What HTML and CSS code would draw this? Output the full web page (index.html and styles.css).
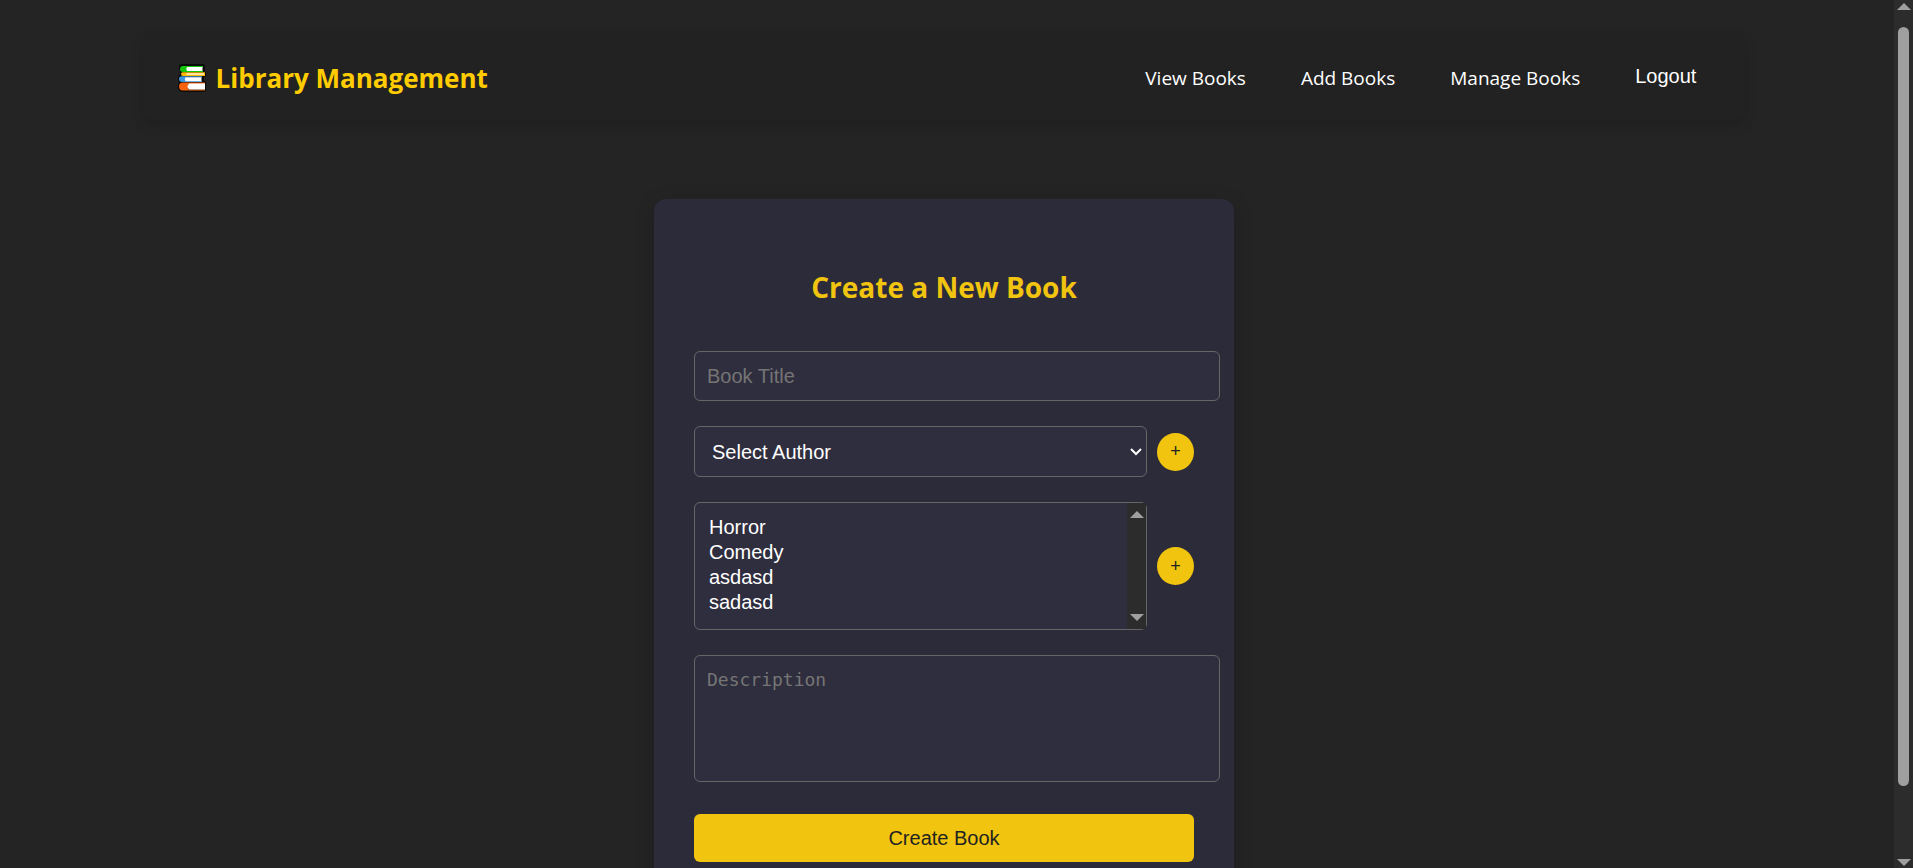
FILE: index.html
```
<!DOCTYPE html>
<html lang="en">
<head>
<meta charset="utf-8">
<title>Library Management</title>
<link rel="stylesheet" href="styles.css">
</head>
<body>
<div class="shell">
  <div class="content">
    <header class="navbar">
      <div class="brand">
        <svg class="brand-icon" viewBox="0 0 28 28" aria-hidden="true">
          <path d="M4 0h21q2 0 2 2v5l-1 1h1q1 0 1 1v3l-2 1v4h1q1 0 1 2v7q0 2-2 2H5q-4 0-5-4 0-4 1-6-1-2-1-4 0-2 2-4V7Q0 5 1 3 1 0 4 0z" fill="#0a0a0a"/>
          <path d="M5 2h20v1.500H9V7h16v1H5Q2 8 2 5t3-3z" fill="#16c60c"/>
          <path d="M9 3h15.500v4H9Q7.500 5 9 3z" fill="#fff"/>
          <path d="M5 8.200h22V12H5q-2 0-2-2t2-1.800z" fill="#ffb900"/>
          <path d="M8.500 9.200H26v1.600H8.500z" fill="#fff3c4"/>
          <path d="M4 12.200h20v1.300H8V17h16v1H4q-3 0-3-3t3-2.800z" fill="#3a96dd"/>
          <path d="M7.500 13.200H23.500v4h-16Q6 15 7.500 13.200z" fill="#fff"/>
          <path d="M5 18.500h22v1.500H10v5.500h17V26.500H5q-4 0-4-4t4-4z" fill="#f7630c"/>
          <path d="M11 19.500h16v6H11Q8 22.500 11 19.500z" fill="#fff"/>
        </svg>
        <span>Library Management</span>
      </div>
      <nav class="links">
        <a href="#view">View Books</a>
        <a href="#add">Add Books</a>
        <a href="#manage">Manage Books</a>
        <button type="button" class="logout">Logout</button>
      </nav>
    </header>

    <main class="card">
      <h1 class="card-title">Create a New Book</h1>
      <form class="form">
        <input class="field" type="text" placeholder="Book Title" aria-label="Book Title">
        <div class="row">
          <div class="control">
            <select class="field select" aria-label="Author">
              <option>Select Author</option>
            </select>
            <svg class="chevron" viewBox="0 0 12 8" aria-hidden="true"><path d="M1 1l5 5 5-5" fill="none" stroke="#fff" stroke-width="2"/></svg>
          </div>
          <button type="button" class="add" aria-label="Add author">+</button>
        </div>
        <div class="row">
          <div class="control">
            <select class="field list" multiple size="4" aria-label="Genres">
              <option>Horror</option>
              <option>Comedy</option>
              <option>asdasd</option>
              <option>sadasd</option>
            </select>
            <div class="list-bar" aria-hidden="true">
              <span class="arrow arrow-up"></span>
              <span class="arrow arrow-down"></span>
            </div>
          </div>
          <button type="button" class="add" aria-label="Add genre">+</button>
        </div>
        <textarea class="field area" placeholder="Description" aria-label="Description"></textarea>
        <button type="submit" class="submit">Create Book</button>
      </form>
    </main>
  </div>
  <div class="page-bar" aria-hidden="true">
    <span class="arrow arrow-up"></span>
    <span class="thumb"></span>
    <span class="arrow arrow-down"></span>
  </div>
</div>
</body>
</html>
```
FILE: styles.css
```
body {
  margin: 0;
  background: #242424;
  color: #fff;
  font-family: "Segoe UI", "Open Sans", "Noto Sans", sans-serif;
}

.shell {
  display: grid;
  grid-template-columns: 1fr 19px;
  height: 100vh;
}

.content {
  display: flex;
  flex-direction: column;
  align-items: center;
  overflow: hidden;
  padding: 32px 6px 0 0;
}

.navbar {
  display: flex;
  flex-shrink: 0;
  align-items: center;
  justify-content: space-between;
  box-sizing: border-box;
  width: 85%;
  height: 88px;
  padding: 4px 50px 0 36px;
  border-radius: 10px;
  background: #222;
  box-shadow: 0 5px 12px rgba(0, 0, 0, 0.15);
}

.brand {
  display: flex;
  align-items: center;
  gap: 10px;
  color: #fc0;
  font-size: 26px;
  font-weight: 700;
}

.brand-icon {
  width: 28px;
  height: 28px;
}

.links {
  display: flex;
  align-items: center;
  gap: 55px;
  font-size: 19px;
}

.links a {
  color: #fff;
  text-decoration: none;
}

.logout {
  padding: 0 0 4px;
  border: 0;
  background: none;
  color: #fff;
  font: 20px "Liberation Sans", Arial, sans-serif;
}

.card {
  flex-shrink: 0;
  width: 500px;
  margin-top: 79px;
  padding: 40px 40px 50px;
  border-radius: 12px;
  background: #2c2b3a;
  box-shadow: 0 5px 20px rgba(0, 0, 0, 0.2);
}

.card-title {
  margin: 28px 0 44px;
  color: #f1c40f;
  font-size: 28px;
  line-height: 40px;
  text-align: center;
}

.form {
  display: flex;
  flex-direction: column;
  gap: 25px;
}

.field {
  box-sizing: content-box;
  width: 100%;
  margin: 0;
  padding: 12px;
  border: 1px solid #666;
  border-radius: 6px;
  background: #2f2e3e;
  color: #fff;
  font-family: "Liberation Sans", Arial, sans-serif;
  font-size: 20px;
  line-height: 24px;
}

.field::placeholder {
  color: #757575;
}

.row {
  display: flex;
  align-items: center;
  gap: 10px;
}

.control {
  position: relative;
  display: flex;
  flex: 1;
}

.select,
.list {
  box-sizing: border-box;
  appearance: none;
}

.select {
  height: 51px;
  padding: 0 17px;
}

.list {
  height: 128px;
  padding: 13px 12px 12px;
  overflow: hidden;
}

.list option {
  min-height: 25px;
  padding: 0 2px;
  line-height: 25px;
}

.chevron {
  position: absolute;
  top: 22px;
  right: 5px;
  width: 12px;
  height: 8px;
}

.list-bar {
  position: absolute;
  top: 1px;
  right: 1px;
  bottom: 1px;
  display: flex;
  flex-direction: column;
  align-items: center;
  justify-content: space-between;
  box-sizing: border-box;
  width: 19px;
  padding: 8px 0;
  background: #2c2c2c;
}

.arrow {
  border: 0 solid transparent;
  border-right-width: 7px;
  border-left-width: 7px;
}

.arrow-up {
  border-bottom: 7px solid #9f9f9f;
}

.arrow-down {
  border-top: 7px solid #9f9f9f;
}

.add {
  width: 37px;
  height: 38px;
  padding: 0;
  border: 0;
  border-radius: 50%;
  background: #f1c40f;
  color: #222;
  font: 18px "Liberation Sans", Arial, sans-serif;
}

.area {
  height: 101px;
  resize: none;
  font-family: Consolas, "DejaVu Sans Mono", monospace;
  font-size: 18px;
}

.submit {
  height: 48px;
  margin-top: 7px;
  border: 0;
  border-radius: 6px;
  background: #f1c40f;
  color: #222;
  font: 20px "Liberation Sans", Arial, sans-serif;
}

.page-bar {
  display: flex;
  flex-direction: column;
  align-items: center;
  box-sizing: border-box;
  padding: 3px 0 2px;
  background: #2c2c2c;
}

.thumb {
  flex: 0 0 88%;
  width: 11px;
  margin: 17px 0 auto;
  border-radius: 6px;
  background: #9f9f9f;
}
```
